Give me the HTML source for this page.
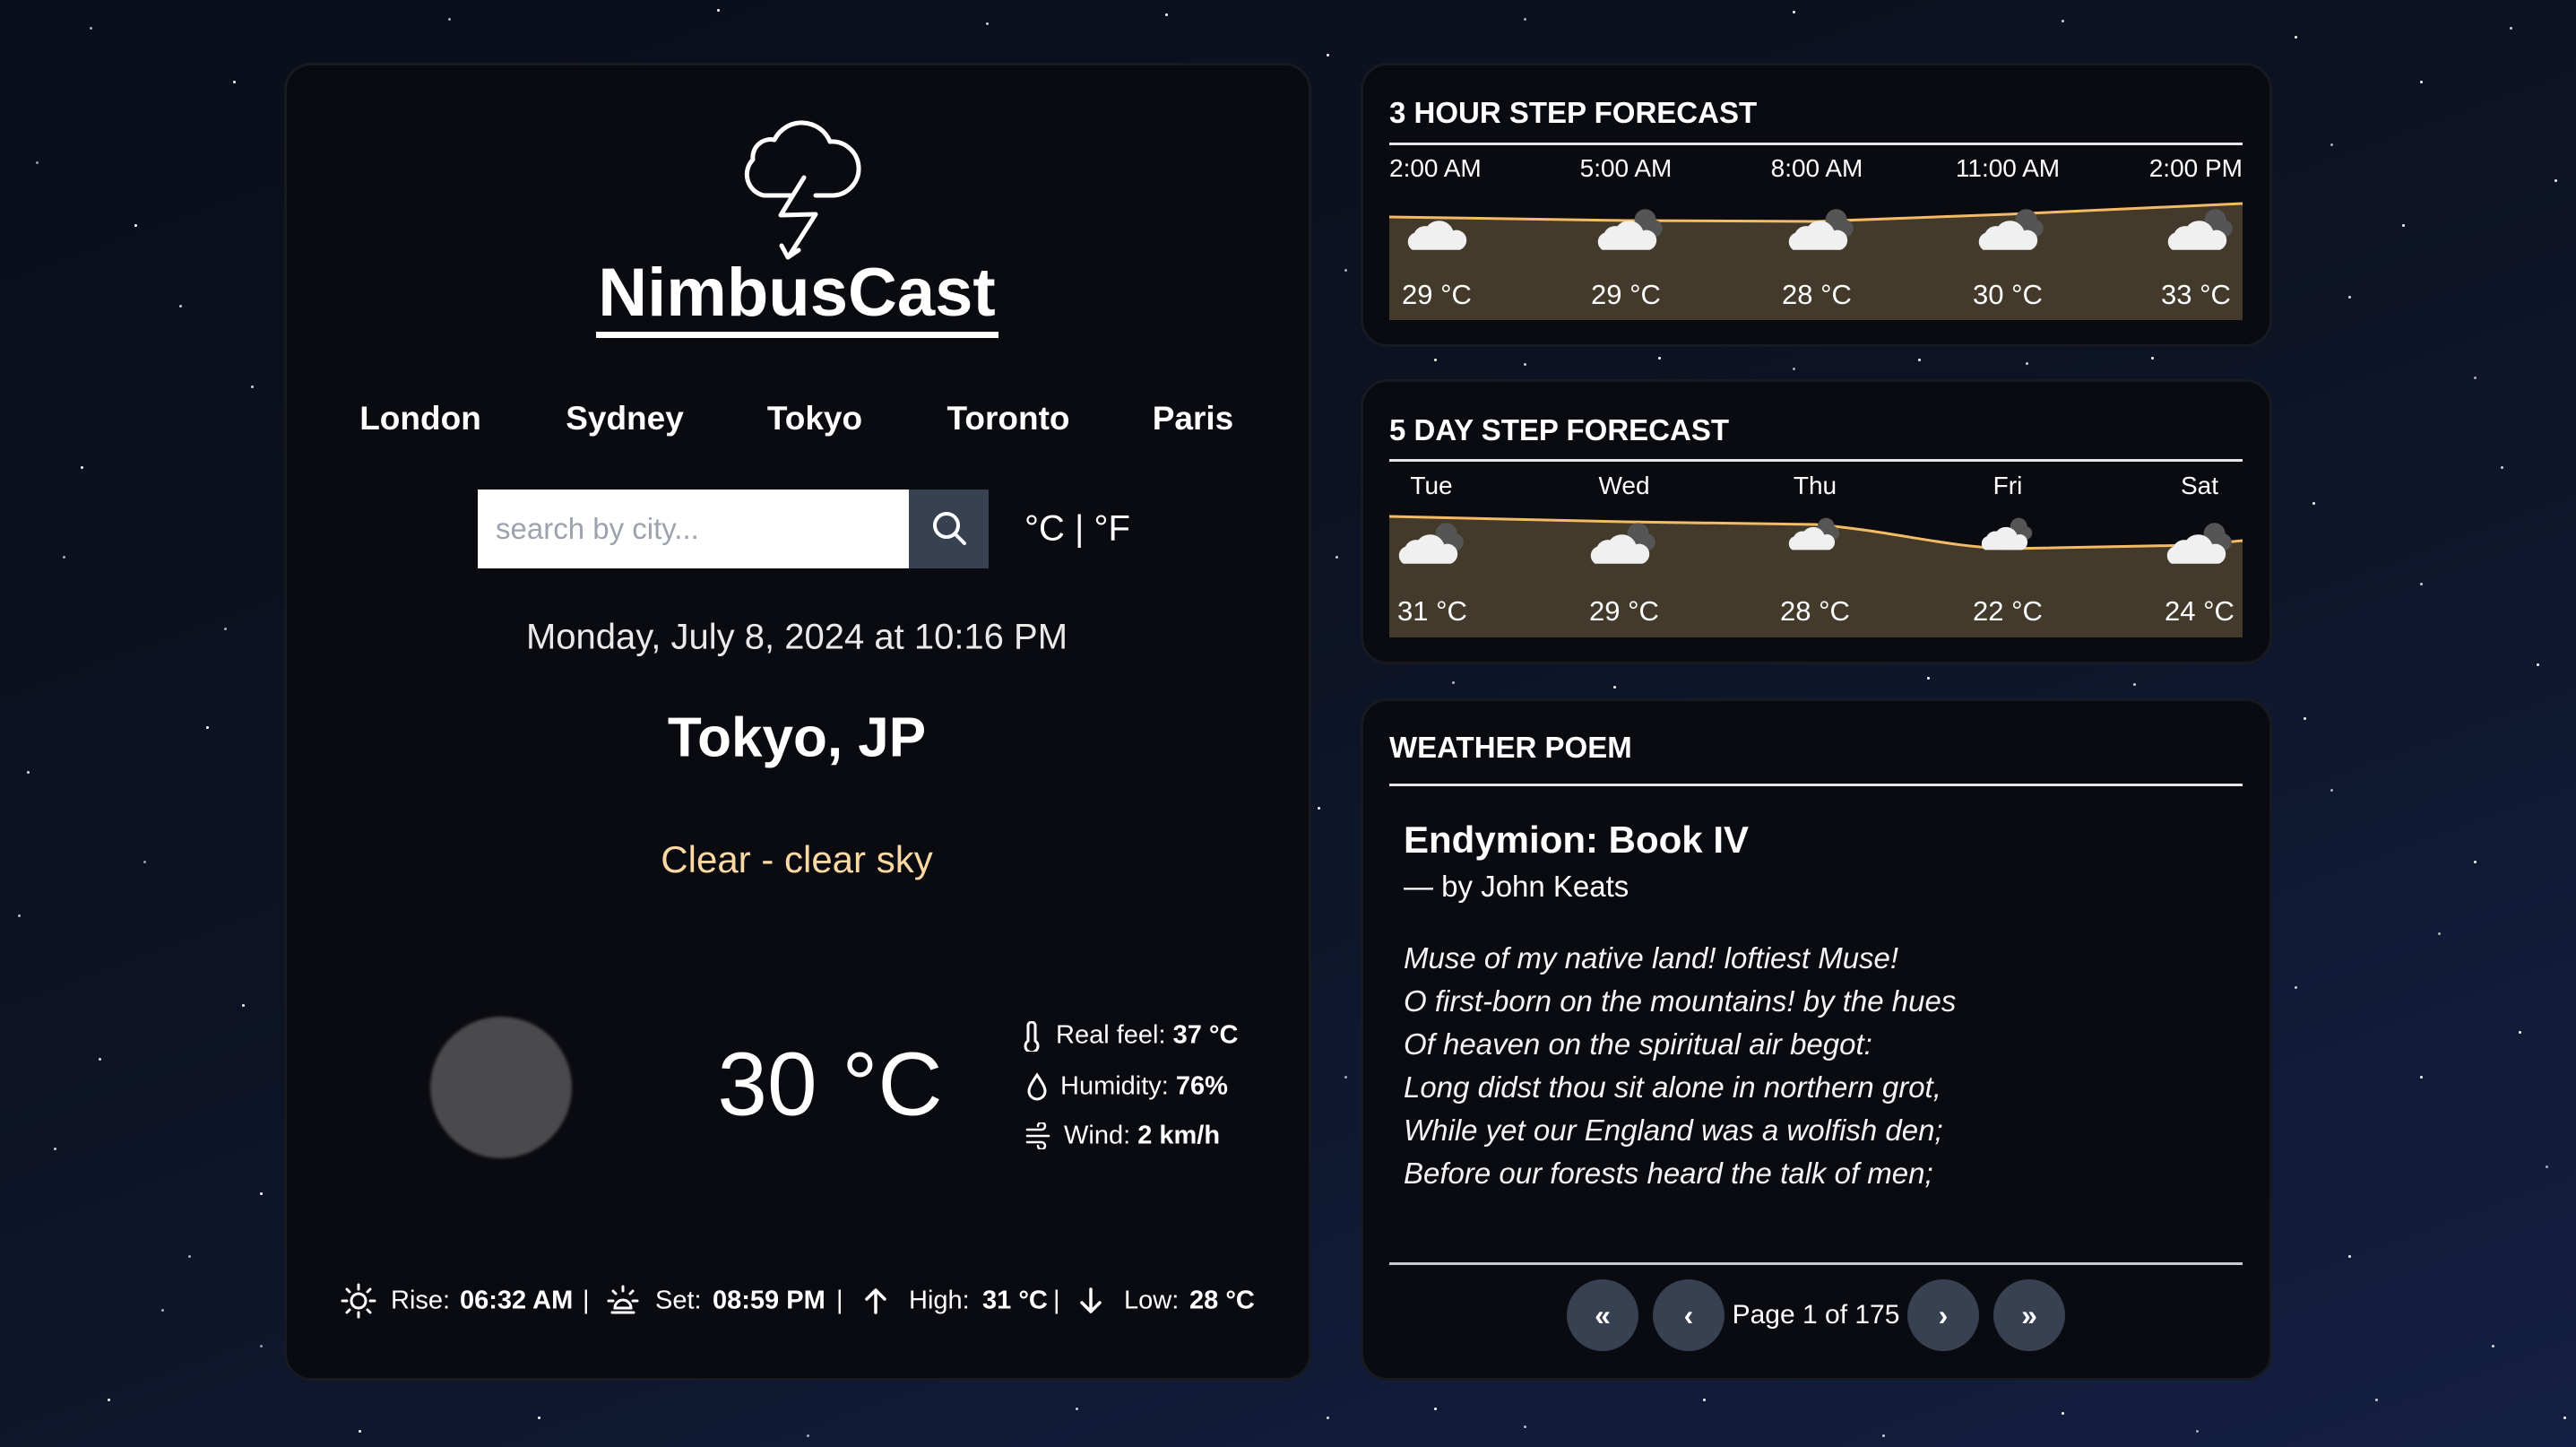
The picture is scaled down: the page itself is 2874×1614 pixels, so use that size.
<!DOCTYPE html>
<html><head><meta charset="utf-8"><style>
*{margin:0;padding:0;box-sizing:border-box}
body{width:2874px;height:1614px;overflow:hidden;background:linear-gradient(160deg,#0a0e1a 0%,#0d1324 45%,#142043 100%);font-family:"Liberation Sans",sans-serif;color:#fff;position:relative}
.stars{position:absolute;left:0;top:0;width:3px;height:3px;border-radius:50%;background:transparent;box-shadow:
100px 30px #aab,260px 90px #fff,40px 180px #99a,200px 340px #ccd,90px 520px #fff,250px 700px #aab,30px 860px #ddd,160px 960px #99a,270px 1120px #fff,60px 1280px #ccd,210px 1400px #aab,120px 1560px #fff,290px 1500px #999,20px 1020px #bbb,150px 250px #fff,280px 430px #ccd,70px 620px #aab,230px 810px #fff,110px 1180px #ddd,290px 1330px #fff,180px 1460px #aab,
1480px 60px #fff,1500px 300px #aab,1490px 620px #ccd,1470px 900px #fff,1500px 1200px #aab,1480px 1580px #ddd,1600px 1570px #fff,1700px 1590px #bbb,1900px 1560px #fff,2100px 1600px #ccd,2300px 1575px #fff,2450px 1595px #aab,
1600px 400px #fff,1700px 405px #ccd,1850px 398px #fff,2000px 410px #aab,2140px 400px #fff,2260px 404px #ccd,2400px 398px #fff,1620px 760px #bbb,1800px 765px #fff,2150px 755px #fff,2380px 762px #ccd,
2560px 40px #fff,2600px 160px #aab,2700px 90px #fff,2800px 30px #ccd,2850px 200px #fff,2620px 330px #ddd,2760px 420px #aab,2580px 560px #fff,2700px 650px #ccd,2830px 740px #fff,2600px 880px #aab,2760px 960px #fff,2560px 1100px #ccd,2700px 1200px #fff,2840px 1300px #aab,2620px 1400px #fff,2780px 1500px #ddd,2860px 1580px #fff,2650px 1560px #ccd,2680px 250px #fff,2790px 520px #ccd,2570px 800px #fff,2720px 1040px #aab,2810px 1150px #fff,
500px 20px #aab,800px 10px #fff,1100px 25px #ccd,1300px 15px #fff,1700px 20px #aab,2000px 12px #fff,2300px 22px #ccd,600px 1580px #fff,900px 1600px #aab,1200px 1570px #ccd,400px 1595px #fff}
.card{position:absolute;background:#0a0b10;border:3px solid #181a21;border-radius:30px}
.abs{position:absolute;white-space:nowrap}
.c{transform:translateX(-50%)}
.cy{transform:translate(-50%,-50%)}
.ly{transform:translateY(-50%)}
.title{font-size:33px;font-weight:bold}
.rule{position:absolute;left:1550px;width:952px;height:3px;background:#e6e6ea}
.btn{position:absolute;width:80px;height:80px;border-radius:50%;background:#374151;transform:translate(-50%,-50%);display:flex;align-items:center;justify-content:center;font-size:32px;font-weight:bold}
.b{font-size:29px;position:absolute;top:1451px;transform:translateY(-50%);white-space:nowrap}
</style></head><body>
<div class="stars"></div>

<div class="card" style="left:317px;top:70px;width:1146px;height:1470px"></div>
<svg class="abs" style="left:818px;top:128px" width="144" height="165" viewBox="0 0 144 165" fill="none" stroke="#fff" stroke-width="5" stroke-linecap="round" stroke-linejoin="round">
<path d="M66 90 H34 A24 24 0 0 1 22 50 A20 20 0 0 1 46 28 A34 34 0 0 1 108 30 A30 30 0 0 1 112 90 H92"/>
<path d="M79 70 L53 112 L92 111 L62 158"/>
<path d="M54 146 L61 159 L73 151"/>
</svg>
<div class="abs c" style="left:889px;top:282px;font-size:76px;font-weight:bold;line-height:90px">NimbusCast</div>
<div class="abs" style="left:665px;top:370px;width:449px;height:7px;background:#fff"></div>

<div class="abs cy" style="left:469px;top:467px;font-size:37px;font-weight:bold">London</div>
<div class="abs cy" style="left:697px;top:467px;font-size:37px;font-weight:bold">Sydney</div>
<div class="abs cy" style="left:909px;top:467px;font-size:37px;font-weight:bold">Tokyo</div>
<div class="abs cy" style="left:1125px;top:467px;font-size:37px;font-weight:bold">Toronto</div>
<div class="abs cy" style="left:1331px;top:467px;font-size:37px;font-weight:bold">Paris</div>

<div class="abs" style="left:533px;top:546px;width:481px;height:88px;background:#fff"></div>
<div class="abs ly" style="left:553px;top:590px;font-size:33px;color:#9ca3af">search by city...</div>
<div class="abs" style="left:1014px;top:546px;width:89px;height:88px;background:#374151"></div>
<svg class="abs" style="left:1037px;top:567px" width="44" height="44" viewBox="0 0 44 44" fill="none" stroke="#fff" stroke-width="4" stroke-linecap="round"><circle cx="19" cy="19" r="13"/><path d="M29 29 L39 39"/></svg>
<div class="abs ly" style="left:1143px;top:590px;font-size:40px">°C | °F</div>

<div class="abs cy" style="left:889px;top:711px;font-size:40px;color:#eaeaea">Monday, July 8, 2024 at 10:16 PM</div>
<div class="abs cy" style="left:889px;top:823px;font-size:62px;font-weight:bold">Tokyo, JP</div>
<div class="abs cy" style="left:889px;top:959px;font-size:42px;color:#fcd9a4">Clear - clear sky</div>

<div class="abs" style="left:480px;top:1134px;width:158px;height:158px;border-radius:50%;background:#4a4a4c;filter:blur(1.5px)"></div>
<div class="abs cy" style="left:926px;top:1210px;font-size:100px">30 °C</div>

<svg class="abs" style="left:1140px;top:1139px" width="22" height="34" viewBox="0 0 22 34" fill="none" stroke="#fff" stroke-width="3"><path d="M7 22 V5 A4 4 0 0 1 15 5 V22 A7 7 0 1 1 7 22 Z"/></svg>
<div class="abs ly" style="left:1178px;top:1155px;font-size:29px">Real feel: <b>37 °C</b></div>
<svg class="abs" style="left:1145px;top:1196px" width="24" height="32" viewBox="0 0 24 32" fill="none" stroke="#fff" stroke-width="3"><path d="M12 3 C6 12 3 17 3 21 A9 9 0 0 0 21 21 C21 17 18 12 12 3 Z"/></svg>
<div class="abs ly" style="left:1183px;top:1212px;font-size:29px">Humidity: <b>76%</b></div>
<svg class="abs" style="left:1144px;top:1252px" width="32" height="30" viewBox="0 0 32 30" fill="none" stroke="#fff" stroke-width="2.5" stroke-linecap="round"><path d="M2 8 H18 A4 4 0 1 0 14 4"/><path d="M2 15 H26"/><path d="M2 22 H18 A4 4 0 1 1 14 26"/></svg>
<div class="abs ly" style="left:1187px;top:1267px;font-size:29px">Wind: <b>2 km/h</b></div>

<svg class="abs" style="left:380px;top:1431px" width="40" height="40" viewBox="0 0 40 40" fill="none" stroke="#fff" stroke-width="3" stroke-linecap="round"><circle cx="20" cy="20" r="8"/><path d="M20 2v5M20 33v5M2 20h5M33 20h5M7 7l3 3M30 30l3 3M7 33l3-3M30 10l3-3"/></svg>
<div class="b" style="left:436px">Rise:</div>
<div class="b" style="left:513px;font-weight:bold">06:32 AM</div>
<div class="b" style="left:650px">|</div>
<svg class="abs" style="left:675px;top:1431px" width="40" height="40" viewBox="0 0 40 40" fill="none" stroke="#fff" stroke-width="3" stroke-linecap="round"><path d="M11 28 A9 9 0 0 1 29 28 Z"/><path d="M20 4v5M4 20h5M31 20h5M9 9l3 3M28 12l3-3M8 33h24"/></svg>
<div class="b" style="left:731px">Set:</div>
<div class="b" style="left:795px;font-weight:bold">08:59 PM</div>
<div class="b" style="left:933px">|</div>
<svg class="abs" style="left:964px;top:1436px" width="26" height="30" viewBox="0 0 26 30" fill="none" stroke="#fff" stroke-width="3.5" stroke-linecap="round" stroke-linejoin="round"><path d="M13 28 V3 M3 13 L13 3 L23 13"/></svg>
<div class="b" style="left:1014px">High:</div>
<div class="b" style="left:1096px;font-weight:bold">31 °C</div>
<div class="b" style="left:1175px">|</div>
<svg class="abs" style="left:1204px;top:1436px" width="26" height="30" viewBox="0 0 26 30" fill="none" stroke="#fff" stroke-width="3.5" stroke-linecap="round" stroke-linejoin="round"><path d="M13 2 V27 M3 17 L13 27 L23 17"/></svg>
<div class="b" style="left:1254px">Low:</div>
<div class="b" style="left:1327px;font-weight:bold">28 °C</div>

<svg width="0" height="0" style="position:absolute"><defs>
<symbol id="cl" viewBox="0 0 70 50"><circle cx="48" cy="16" r="10" fill="#555"/><circle cx="56" cy="24" r="8" fill="#555"/><path d="M8 44 A9 9 0 0 1 10 28 A11 11 0 0 1 22 22 A14 14 0 0 1 46 26 A9 9 0 0 1 52 44 Z" fill="#f0f0f0"/></symbol>
<symbol id="cw" viewBox="0 0 70 50"><path d="M8 44 A9 9 0 0 1 10 28 A11 11 0 0 1 22 22 A14 14 0 0 1 46 26 A9 9 0 0 1 52 44 Z" fill="#f0f0f0"/></symbol>
</defs></svg>

<div class="card" style="left:1518px;top:70px;width:1017px;height:317px"></div>
<div class="abs ly title" style="left:1550px;top:126px">3 HOUR STEP FORECAST</div>
<div class="rule" style="top:159px"></div>
<div class="abs ly" style="left:1550px;top:188px;font-size:28px">2:00 AM</div>
<div class="abs cy" style="left:1814px;top:188px;font-size:28px">5:00 AM</div>
<div class="abs cy" style="left:2027px;top:188px;font-size:28px">8:00 AM</div>
<div class="abs cy" style="left:2240px;top:188px;font-size:28px">11:00 AM</div>
<div class="abs ly" style="right:372px;top:188px;font-size:28px">2:00 PM</div>
<svg class="abs" style="left:1550px;top:220px" width="952" height="137" viewBox="0 0 952 137">
<path d="M0 22 L265 26 L477 27 L690 19 L952 7 V137 H0 Z" fill="#433a2b"/>
<path d="M0 22 L265 26 L477 27 L690 19 L952 7" fill="none" stroke="#f4bb66" stroke-width="3"/>
<use href="#cw" x="16" y="6" width="84" height="60"/>
<use href="#cl" x="228" y="6" width="84" height="60"/>
<use href="#cl" x="441" y="6" width="84" height="60"/>
<use href="#cl" x="653" y="6" width="84" height="60"/>
<use href="#cl" x="864" y="6" width="84" height="60"/>
</svg>
<div class="abs cy" style="left:1603px;top:329px;font-size:31px">29 °C</div>
<div class="abs cy" style="left:1814px;top:329px;font-size:31px">29 °C</div>
<div class="abs cy" style="left:2027px;top:329px;font-size:31px">28 °C</div>
<div class="abs cy" style="left:2240px;top:329px;font-size:31px">30 °C</div>
<div class="abs cy" style="left:2450px;top:329px;font-size:31px">33 °C</div>

<div class="card" style="left:1518px;top:423px;width:1017px;height:318px"></div>
<div class="abs ly title" style="left:1550px;top:480px">5 DAY STEP FORECAST</div>
<div class="rule" style="top:512px"></div>
<div class="abs cy" style="left:1597px;top:542px;font-size:28px">Tue</div>
<div class="abs cy" style="left:1812px;top:542px;font-size:28px">Wed</div>
<div class="abs cy" style="left:2025px;top:542px;font-size:28px">Thu</div>
<div class="abs cy" style="left:2240px;top:542px;font-size:28px">Fri</div>
<div class="abs cy" style="left:2454px;top:542px;font-size:28px">Sat</div>
<svg class="abs" style="left:1550px;top:570px" width="952" height="141" viewBox="0 0 952 141">
<path d="M0 6 L262 12 L475 15 C560 22 620 40 690 42 L900 38 L952 33 V141 H0 Z" fill="#433a2b"/>
<path d="M0 6 L262 12 L475 15 C560 22 620 40 690 42 L900 38 L952 33" fill="none" stroke="#f4bb66" stroke-width="3"/>
<use href="#cl" x="6" y="6" width="84" height="60"/>
<use href="#cl" x="220" y="6" width="84" height="60"/>
<use href="#cl" x="442" y="2" width="66" height="47"/>
<use href="#cl" x="657" y="2" width="66" height="47"/>
<use href="#cl" x="863" y="6" width="84" height="60"/>
</svg>
<div class="abs cy" style="left:1598px;top:682px;font-size:31px">31 °C</div>
<div class="abs cy" style="left:1812px;top:682px;font-size:31px">29 °C</div>
<div class="abs cy" style="left:2025px;top:682px;font-size:31px">28 °C</div>
<div class="abs cy" style="left:2240px;top:682px;font-size:31px">22 °C</div>
<div class="abs cy" style="left:2454px;top:682px;font-size:31px">24 °C</div>

<div class="card" style="left:1518px;top:779px;width:1017px;height:761px"></div>
<div class="abs ly title" style="left:1550px;top:834px">WEATHER POEM</div>
<div class="rule" style="top:874px"></div>
<div class="abs ly" style="left:1566px;top:937px;font-size:42px;font-weight:bold">Endymion: Book IV</div>
<div class="abs ly" style="left:1566px;top:989px;font-size:33px">— by John Keats</div>
<div class="abs" style="left:1566px;top:1045px;font-size:33px;font-style:italic;line-height:48px;color:#f4f4f4">
Muse of my native land! loftiest Muse!<br>O first-born on the mountains! by the hues<br>Of heaven on the spiritual air begot:<br>Long didst thou sit alone in northern grot,<br>While yet our England was a wolfish den;<br>Before our forests heard the talk of men;</div>
<div class="rule" style="top:1408px;background:#c8cad0"></div>
<div class="btn" style="left:1788px;top:1467px">«</div>
<div class="btn" style="left:1884px;top:1467px">‹</div>
<div class="abs cy" style="left:2026px;top:1467px;font-size:30px">Page 1 of 175</div>
<div class="btn" style="left:2168px;top:1467px">›</div>
<div class="btn" style="left:2264px;top:1467px">»</div>
</body></html>
